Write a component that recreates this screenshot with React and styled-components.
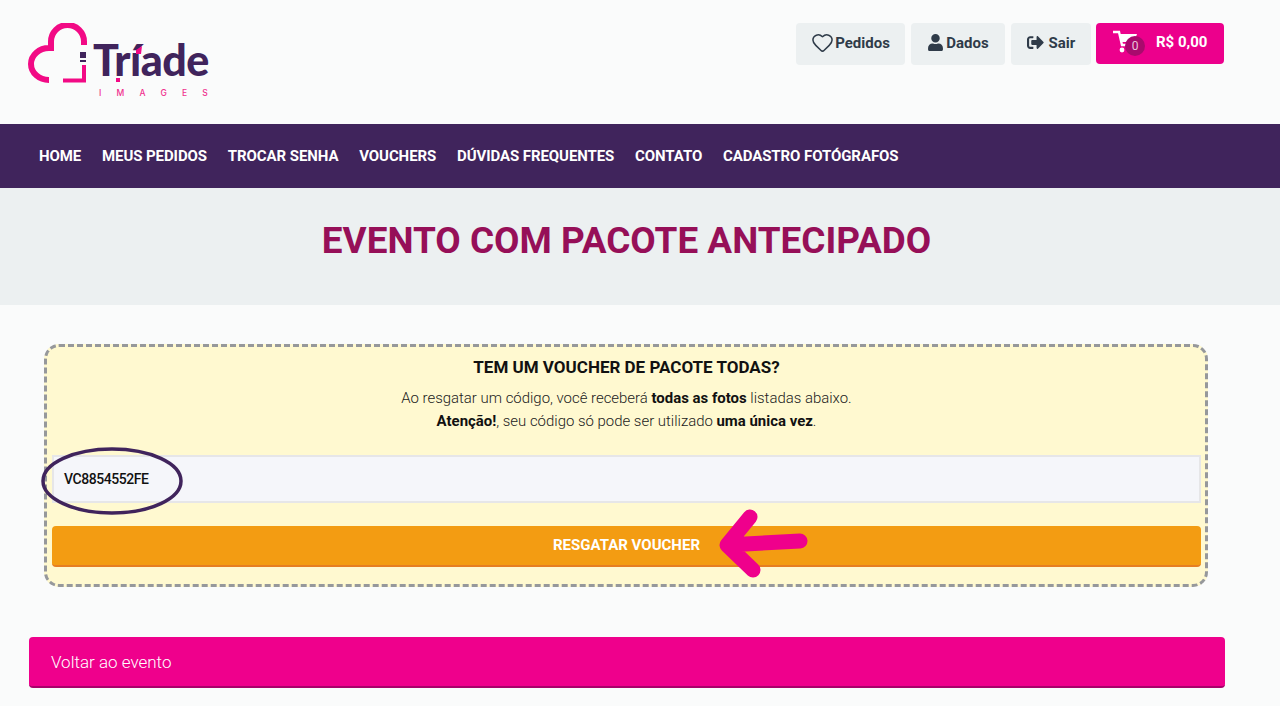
import React from "react";
import styled, { createGlobalStyle } from "styled-components";
import { FaUser, FaSignOutAlt } from "react-icons/fa";
import { Heart } from "lucide-react";

const GlobalStyle = createGlobalStyle`
  html, body {
    margin: 0;
    padding: 0;
    background: #fafbfb;
    font-family: Roboto, "Liberation Sans", sans-serif;
    overflow: hidden;
  }
  * { box-sizing: border-box; }
`;

const Page = styled.div`
  width: 1280px;
  height: 706px;
  overflow: hidden;
`;

const Header = styled.header`
  height: 124px;
  padding: 23px 56px 0 28px;
  display: flex;
  justify-content: space-between;
  align-items: flex-start;
`;

const LogoWrap = styled.div`
  display: flex;
  flex-direction: column;
  width: 210px;
`;

const LogoName = styled.text`
  font-family: Lato, "Liberation Sans", sans-serif;
  font-weight: 900;
  font-size: 43px;
  letter-spacing: -0.5px;
  fill: #40245c;
`;

const LogoSub = styled.text`
  font-family: Inter, "Liberation Sans", sans-serif;
  font-weight: 500;
  font-size: 8.5px;
  letter-spacing: 15.2px;
  fill: #f0328f;
`;

const TopActions = styled.div`
  display: flex;
  gap: 6px;
  align-items: flex-start;
`;

const TopButton = styled.button`
  height: 42px;
  width: ${(p) => p.$w}px;
  border: 0;
  border-radius: 4px;
  background: #ecf0f1;
  color: #2f3b49;
  font-family: inherit;
  font-size: 15px;
  font-weight: 700;
  display: flex;
  align-items: center;
  justify-content: center;
  gap: ${(p) => p.$gap || 3}px;
  padding: 0 0 3px;
  svg { font-size: ${(p) => p.$icon || 17}px; }
`;

const CartButton = styled.button`
  position: relative;
  height: 41px;
  width: 128px;
  margin-left: -1px;
  border: 0;
  border-radius: 4px;
  background: #ec008c;
  color: #fff;
  font-family: inherit;
  font-size: 15px;
  font-weight: 700;
  display: flex;
  align-items: center;
  padding: 0 0 3px 17px;
`;

const CartBadge = styled.span`
  position: absolute;
  left: 29px;
  top: 13px;
  width: 20px;
  height: 20px;
  border-radius: 50%;
  background: #a90a6d;
  color: #e9c6dc;
  font-size: 12px;
  font-weight: 400;
  display: flex;
  align-items: center;
  justify-content: center;
`;

const CartTotal = styled.span`
  margin-left: 17px;
`;

const Nav = styled.nav`
  height: 64px;
  background: #40245c;
  display: flex;
  align-items: center;
  gap: 20.8px;
  padding-left: 39px;
`;

const NavItem = styled.a`
  color: #fff;
  font-size: 15px;
  font-weight: 700;
  letter-spacing: -0.08px;
  text-transform: uppercase;
`;

const TitleBand = styled.div`
  height: 117px;
  background: #ecf0f1;
  display: flex;
  justify-content: center;
  padding: 29px 27px 0 0;
`;

const Title = styled.h1`
  margin: 0;
  font-size: 36.9px;
  line-height: 48px;
  font-weight: 700;
  color: #960f58;
`;

const Content = styled.main`
  padding: 39px 55px 0 28px;
`;

const VoucherBox = styled.section`
  position: relative;
  margin-left: 16px;
  width: 1164px;
  height: 243px;
  border: 3px dashed #96989b;
  border-radius: 15px;
  background: #fff9d0;
  padding: 8px 4px 0 5px;
  display: flex;
  flex-direction: column;
  align-items: center;
`;

const VoucherTitle = styled.h3`
  margin: 0;
  font-size: 17px;
  line-height: 24px;
  font-weight: 700;
  color: #111;
`;

const VoucherText = styled.p`
  margin: 8px 0 0;
  font-size: 14.95px;
  line-height: 23px;
  font-weight: 300;
  color: #222;
  text-align: center;
  b { font-weight: 700; color: #111; }
`;

const CodeField = styled.div`
  width: 100%;
  height: 48px;
  margin-top: 22px;
  border: 2px solid #e6e6e8;
  background: #f5f6fa;
  padding-left: 10px;
  display: flex;
  align-items: center;
  font-size: 14px;
  font-weight: 500;
  letter-spacing: -0.45px;
  color: #111;
`;

const RedeemButton = styled.button`
  width: 100%;
  height: 41px;
  margin-top: 23px;
  border: 0;
  border-bottom: 2px solid #e67e22;
  border-radius: 4px;
  background: #f39c12;
  color: #fff;
  font-family: inherit;
  font-size: 15px;
  font-weight: 700;
  text-transform: uppercase;
  padding: 0 0 2px;
`;

const Ellipse = styled.svg`
  position: absolute;
  left: -6px;
  top: 100px;
`;

const Arrow = styled.svg`
  position: absolute;
  left: 671px;
  top: 161px;
`;

const BackBar = styled.a`
  display: flex;
  align-items: center;
  height: 51px;
  margin-top: 50px;
  margin-left: 1px;
  width: 1196px;
  padding-left: 22px;
  border-bottom: 2px solid #a8016a;
  border-radius: 4px;
  background: #ef008c;
  color: #fff;
  font-size: 17px;
  font-weight: 300;
`;

const NAV_ITEMS = [
  "Home",
  "Meus pedidos",
  "Trocar senha",
  "Vouchers",
  "Dúvidas frequentes",
  "Contato",
  "Cadastro fotógrafos",
];

const Logo = () => (
  <LogoWrap>
    <svg width="210" height="76" viewBox="0 0 210 76">
      <path
        d="M21 57 A18 16 0 0 1 21 25 H23 V18.5 A16.5 16.5 0 0 1 56 18.5 V22"
        fill="none"
        stroke="#f20a85"
        strokeWidth="6"
      />
      <path d="M35 57.5 H56 V42" fill="none" stroke="#f20a85" strokeWidth="4" />
      <rect x="52" y="29" width="6" height="6" fill="#40245c" />
      <rect x="52" y="37" width="6" height="2" fill="#40245c" />
      <LogoName x="65" y="53">Tríade</LogoName>
      <path d="M108 27 L114 23 L113 31 L108 31 Z" fill="#f20a85" />
      <rect x="88" y="55" width="4" height="4" fill="#f20a85" />
      <LogoSub x="71" y="73">IMAGES</LogoSub>
    </svg>
  </LogoWrap>
);

const CartIcon = () => (
  <svg width="26" height="24" viewBox="0 0 26 24">
    <path d="M0 2 H6 L9 15 H21" fill="none" stroke="#fff" strokeWidth="2.4" />
    <path d="M6 4 H24 L21 12 H8 Z" fill="#fff" />
    <circle cx="9" cy="20" r="2.4" fill="#fff" />
    <circle cx="19" cy="20" r="2.4" fill="#fff" />
  </svg>
);

export default function App() {
  return (
    <Page>
      <GlobalStyle />
      <Header>
        <Logo />
        <TopActions>
          <TopButton $w={109} $gap={1}>
            <Heart size={23} strokeWidth={1.6} /> Pedidos
          </TopButton>
          <TopButton $w={94} $icon={17} $gap={2}><FaUser /> Dados</TopButton>
          <TopButton $w={80} $gap={1}><FaSignOutAlt />&nbsp;Sair</TopButton>
          <CartButton>
            <CartIcon />
            <CartBadge>0</CartBadge>
            <CartTotal>R$ 0,00</CartTotal>
          </CartButton>
        </TopActions>
      </Header>
      <Nav>
        {NAV_ITEMS.map((item) => (
          <NavItem key={item}>{item}</NavItem>
        ))}
      </Nav>
      <TitleBand>
        <Title>EVENTO COM PACOTE ANTECIPADO</Title>
      </TitleBand>
      <Content>
        <VoucherBox>
          <VoucherTitle>TEM UM VOUCHER DE PACOTE TODAS?</VoucherTitle>
          <VoucherText>
            Ao resgatar um código, você receberá <b>todas as fotos</b> listadas abaixo.
            <br />
            <b>Atenção!</b>, seu código só pode ser utilizado <b>uma única vez</b>.
          </VoucherText>
          <CodeField>VC8854552FE</CodeField>
          <RedeemButton>Resgatar voucher</RedeemButton>
          <Ellipse width="144" height="70" viewBox="0 0 144 70">
            <ellipse cx="71" cy="34" rx="69" ry="32" fill="none" stroke="#40245c" strokeWidth="3.5" />
          </Ellipse>
          <Arrow width="92" height="72" viewBox="0 0 92 72">
            <path
              d="M32 9 L9 37 L35 62 M9 37 L82 33"
              fill="none"
              stroke="#ef008c"
              strokeWidth="15"
              strokeLinecap="round"
              strokeLinejoin="round"
            />
          </Arrow>
        </VoucherBox>
        <BackBar>Voltar ao evento</BackBar>
      </Content>
    </Page>
  );
}
